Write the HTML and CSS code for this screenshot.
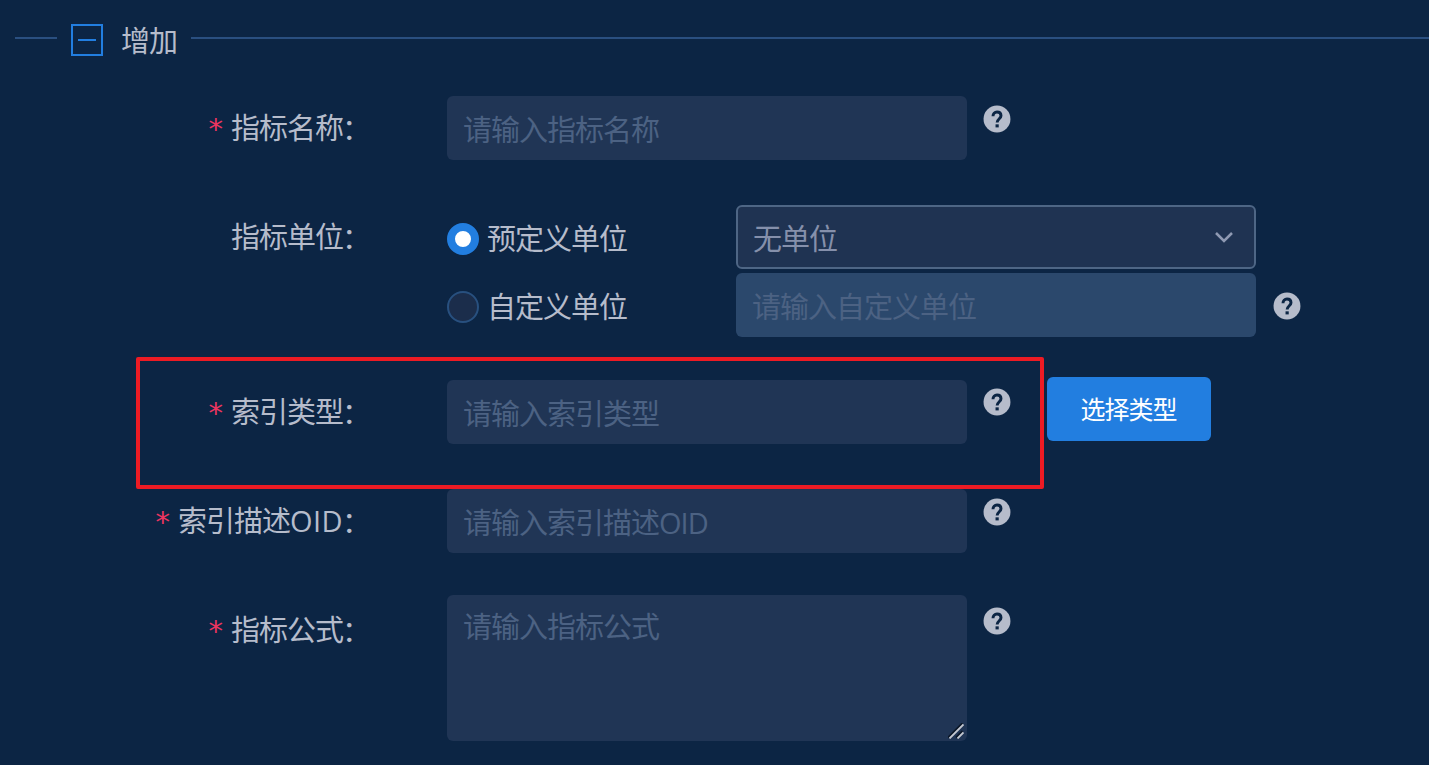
FILE: index.html
```html
<!DOCTYPE html>
<html lang="zh-CN">
<head>
  <meta charset="UTF-8">
  <title>增加</title>
  <link rel="stylesheet" href="styles.css">
</head>
<body>
  <svg class="icon-defs" width="0" height="0">
    <symbol id="icon-help" viewBox="0 0 24 24">
      <circle class="disc" cx="12" cy="12" r="10.1"/>
      <path class="mark" d="M9 9.9c0-1.9 1.2-3.1 3-3.1s3 1.1 3 2.8c0 2.2-2.9 2.3-2.9 5.1"/>
      <path class="dot" d="M10.9 16h2.4v2.3h-2.4z"/>
    </symbol>
  </svg>

  <div class="section-title">
    <span class="line line-left"></span>
    <button class="collapse" type="button"></button>
    <h2>增加</h2>
    <span class="line line-right"></span>
  </div>

  <form class="index-form">
    <div class="form-row row-name">
      <label class="required" for="indexName">指标名称<span class="colon">：</span></label>
      <input type="text" id="indexName" placeholder="请输入指标名称">
      <svg class="help"><use href="#icon-help"/></svg>
    </div>

    <div class="form-row row-unit">
      <label>指标单位<span class="colon">：</span></label>
      <div class="unit-list">
        <div class="unit-item">
          <label class="radio"><input type="radio" name="unit" checked><span>预定义单位</span></label>
          <div class="select">
            <span>无单位</span>
            <svg class="arrow" viewBox="0 0 20 12"><path d="M2 2l8 8 8-8"/></svg>
          </div>
        </div>
        <div class="unit-item">
          <label class="radio"><input type="radio" name="unit"><span>自定义单位</span></label>
          <input type="text" placeholder="请输入自定义单位" disabled>
          <svg class="help"><use href="#icon-help"/></svg>
        </div>
      </div>
    </div>

    <div class="form-row row-type">
      <label class="required" for="indexType">索引类型<span class="colon">：</span></label>
      <input type="text" id="indexType" placeholder="请输入索引类型">
      <svg class="help"><use href="#icon-help"/></svg>
      <button class="btn-primary" type="button">选择类型</button>
      <div class="highlight"></div>
    </div>

    <div class="form-row row-oid">
      <label class="required" for="indexOid">索引描述<span class="latin">OID</span><span class="colon">：</span></label>
      <input type="text" id="indexOid" placeholder="请输入索引描述OID">
      <svg class="help"><use href="#icon-help"/></svg>
    </div>

    <div class="form-row row-formula">
      <label class="required" for="formula">指标公式<span class="colon">：</span></label>
      <div class="textarea-wrap">
        <textarea id="formula" placeholder="请输入指标公式"></textarea>
        <svg class="resizer" viewBox="0 0 16 16">
          <path class="shade" d="M0 14.5L14.5 0M8 14.5L14.5 8"/>
          <path d="M1.5 15.5L15.5 1.5M9.5 15.5L15.5 9.5"/>
        </svg>
      </div>
      <svg class="help"><use href="#icon-help"/></svg>
    </div>
  </form>
</body>
</html>
```

FILE: styles.css
```css
* {
  box-sizing: border-box;
}

body {
  margin: 0;
  height: 765px;
  overflow: hidden;
  background-color: #0c2544;
  color: #b6bccb;
  font-family: "Open Sans", "Noto Sans CJK SC", sans-serif;
  font-size: 29px;
  letter-spacing: -1px;
  line-height: 40px;
}

input,
textarea,
button {
  font: inherit;
  color: inherit;
  letter-spacing: inherit;
}

.icon-defs {
  position: absolute;
}

.section-title {
  display: flex;
  align-items: flex-start;
  height: 96px;
  padding: 24px 0 0 15px;
}

.section-title h2 {
  margin: -3px 14px 0 18px;
  font-size: 29px;
  font-weight: normal;
}

.line {
  height: 2px;
  margin-top: 13px;
  background-color: #2a4f80;
}

.line-left {
  width: 42px;
  margin-right: 14px;
}

.line-right {
  flex: 1;
}

.collapse {
  display: flex;
  width: 32px;
  height: 32px;
  padding: 13px 5px;
  border: 2px solid #227ee0;
  background: none;
}

.collapse::before {
  content: "";
  width: 18px;
  height: 2px;
  background-color: #227ee0;
}

.form-row {
  position: relative;
  display: flex;
  align-items: flex-start;
}

.form-row > label {
  width: 371px;
  margin-right: 76px;
  padding-top: 12px;
  text-align: right;
  white-space: nowrap;
}

.required::before {
  content: "*";
  margin-right: 9px;
  color: #ee3560;
  font-family: "DejaVu Sans", sans-serif;
  line-height: 1;
}

.colon {
  margin: 0 1px 0 -1px;
  line-height: 1;
  vertical-align: -1px;
}

.latin {
  letter-spacing: 0.4px;
}

.row-name,
.row-type {
  height: 109px;
}

.row-unit {
  height: 175px;
}

.row-oid {
  height: 106px;
}

input[type="text"],
textarea,
.select {
  display: block;
  width: 520px;
  height: 64px;
  padding: 2px 16px 0;
  border: none;
  border-radius: 6px;
  background-color: #203555;
}

textarea {
  height: 146px;
  padding-top: 12px;
  resize: none;
}

::placeholder {
  color: #4c6283;
  opacity: 1;
}

input[type="text"]:disabled {
  background-color: #2b486c;
}

.help {
  width: 32px;
  height: 32px;
  margin: 7px 0 0 13.5px;
}

.disc {
  fill: #b6bccb;
}

.mark {
  fill: none;
  stroke: #0c2544;
  stroke-width: 2.2;
}

.dot {
  fill: #0c2544;
}

.unit-item {
  display: flex;
  height: 68px;
}

.unit-item .help {
  margin: 17px 0 0 14.5px;
}

.row-type .help {
  margin-top: 6px;
}

.row-formula > label {
  padding-top: 15px;
}

.row-formula .help {
  margin-top: 10px;
}

.radio {
  display: flex;
  align-items: center;
  width: 289px;
  height: 68px;
}

.radio span {
  margin-left: 8px;
}

.radio input {
  appearance: none;
  width: 32px;
  height: 32px;
  margin: 0;
  border: 2px solid #28507f;
  border-radius: 50%;
  background-color: #1b2d4b;
}

.radio input:checked {
  border: 8px solid #227ee0;
  background-color: #fff;
}

.select {
  display: flex;
  align-items: center;
  justify-content: space-between;
  padding: 0 20px 0 15px;
  border: 2px solid #4e6685;
  background-color: #1f3352;
  color: #8590ab;
}

.select span {
  margin-top: 3px;
}

.arrow {
  width: 20px;
  height: 12px;
  fill: none;
  stroke: #8f9ab3;
  stroke-width: 2.5;
}

.btn-primary {
  width: 164px;
  height: 64px;
  margin: -3px 0 0 34.5px;
  padding: 0 1px 0 0;
  border: none;
  border-radius: 6px;
  background-color: #227ee0;
  color: #fff;
  font-size: 25px;
}

.highlight {
  position: absolute;
  left: 136px;
  top: -23px;
  width: 908px;
  height: 132px;
  border: 4px solid #ed1b24;
  border-radius: 2px;
  pointer-events: none;
}

.textarea-wrap {
  position: relative;
}

.resizer {
  position: absolute;
  right: 3px;
  bottom: 2px;
  width: 16px;
  height: 16px;
  fill: none;
  stroke: #c3c7cf;
  stroke-width: 1.8;
}

.resizer .shade {
  stroke: #0b1728;
}
```
